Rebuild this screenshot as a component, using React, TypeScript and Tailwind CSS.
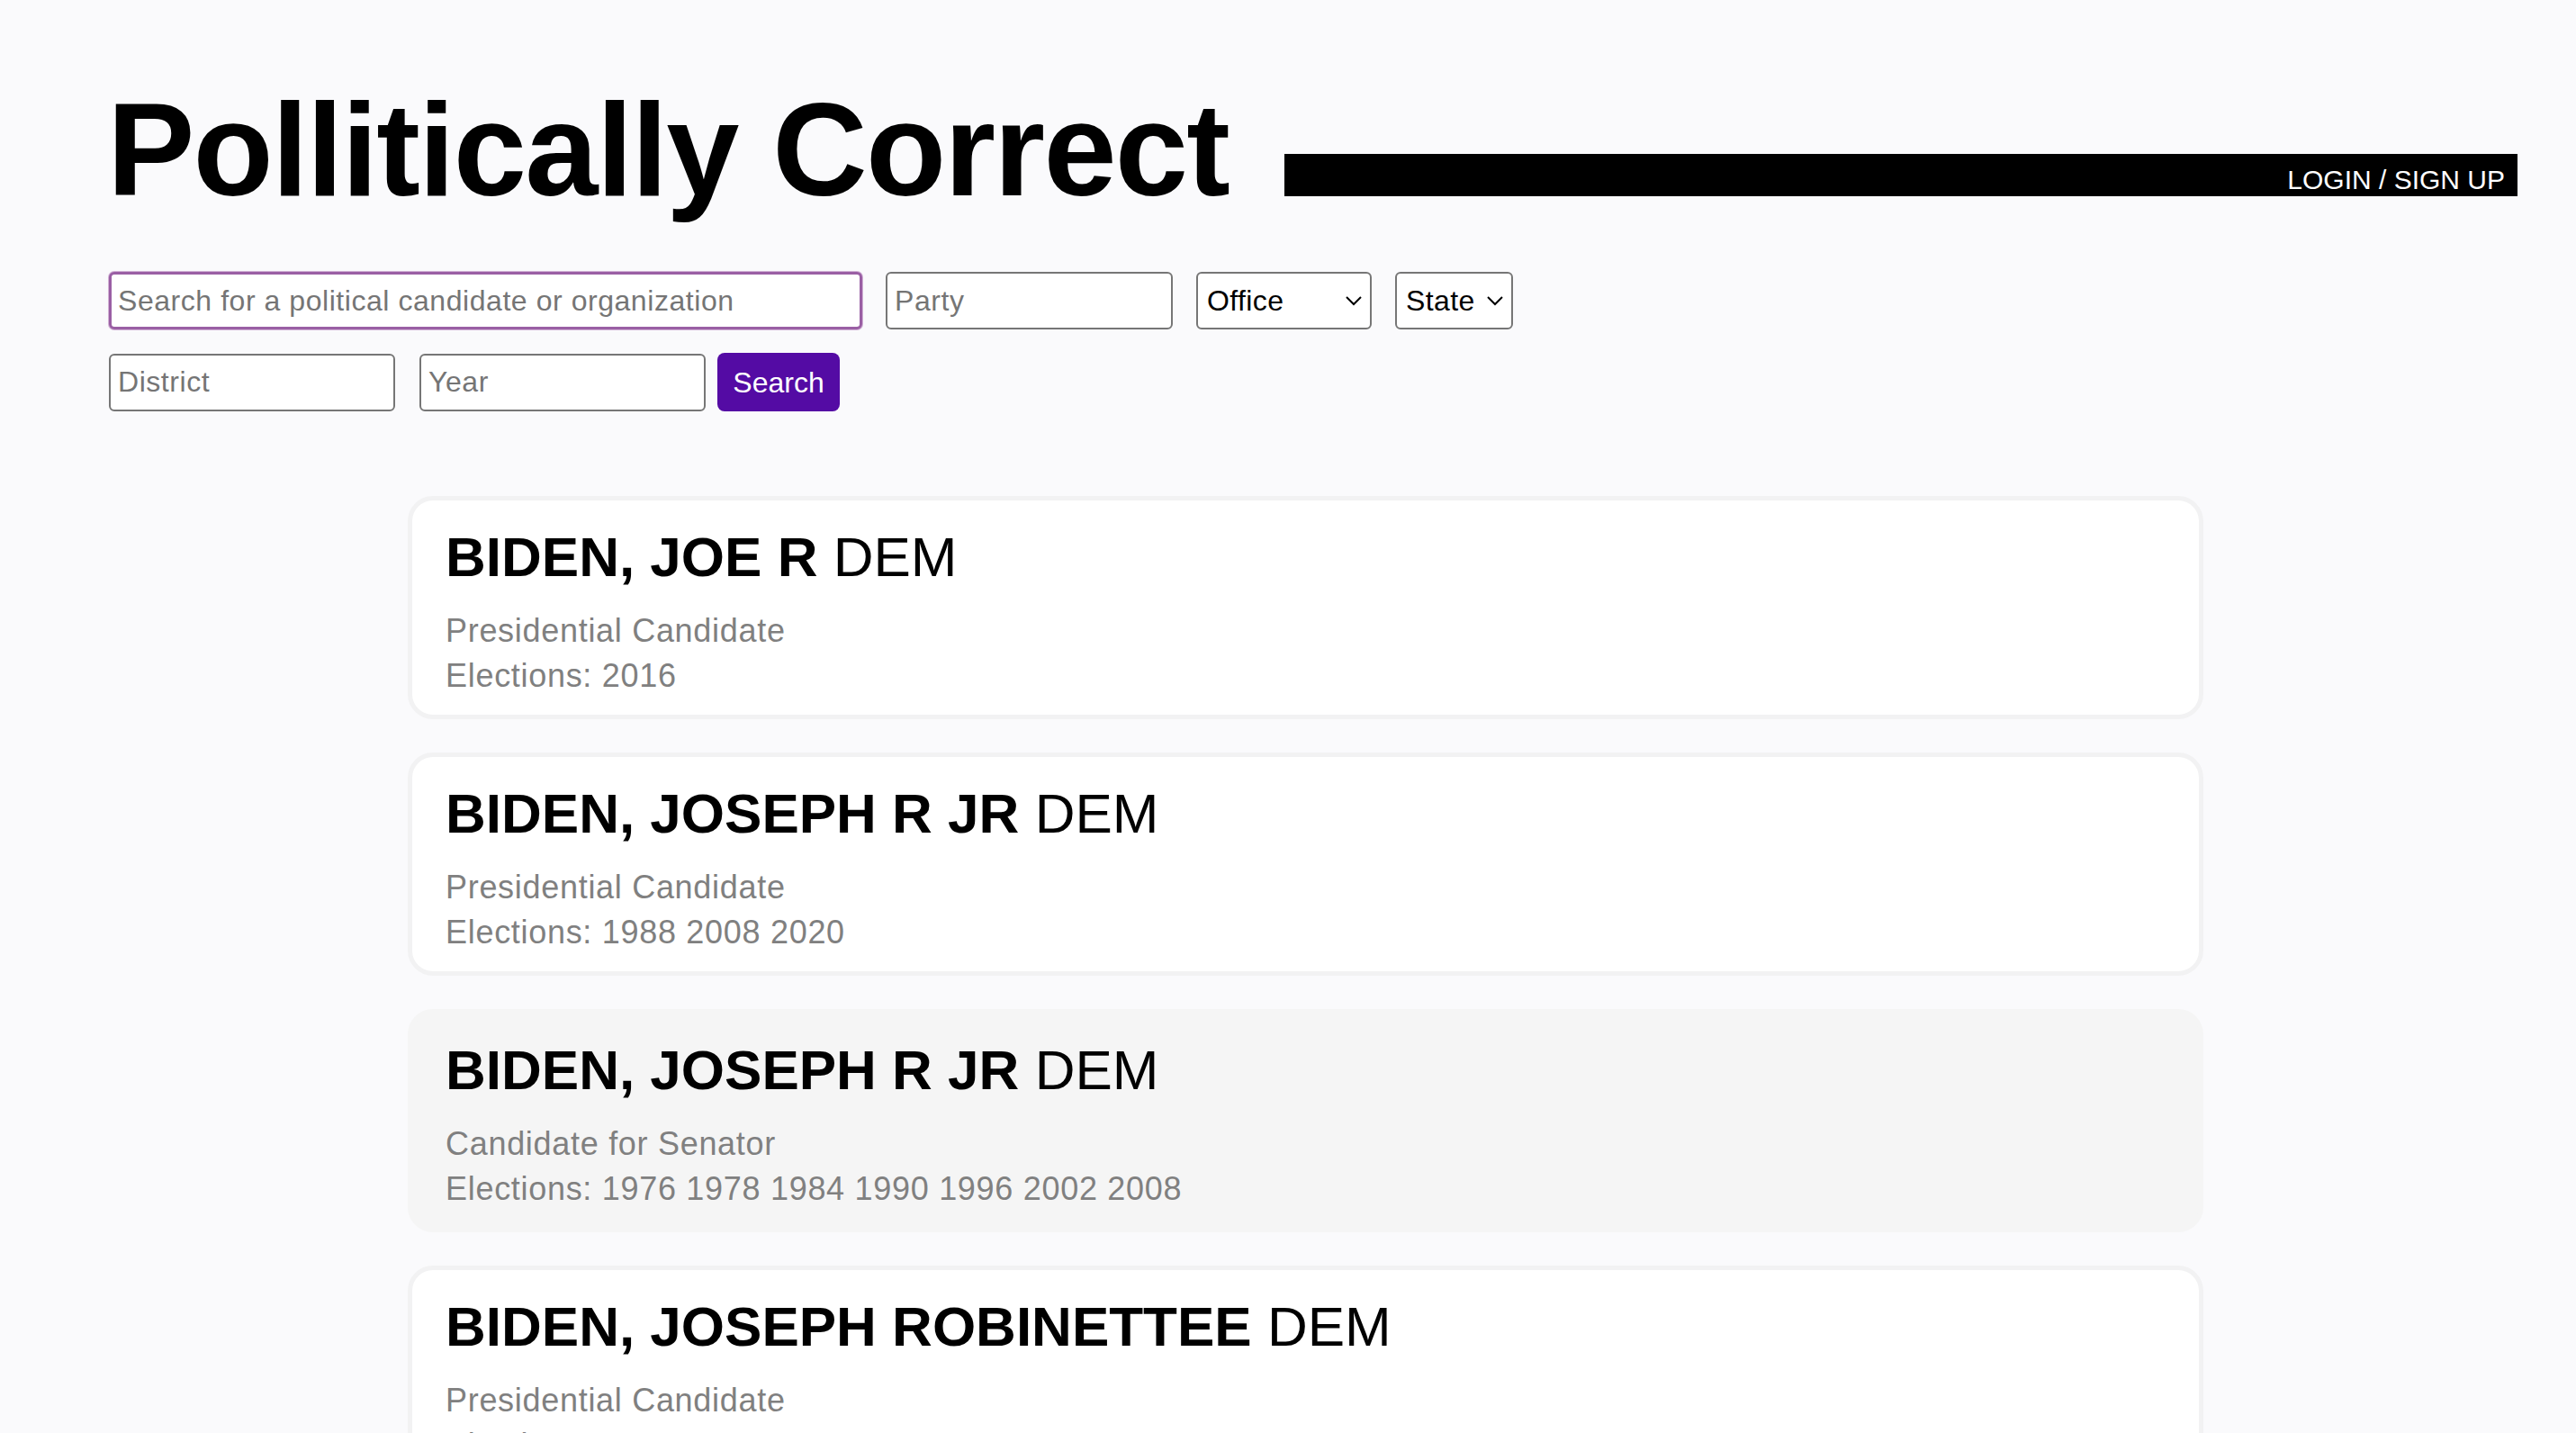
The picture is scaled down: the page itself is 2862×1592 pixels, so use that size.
import React from 'react';

const font = { fontFamily: '"Liberation Sans", Arial, sans-serif' };

type Result = {
  name: string;
  party: string;
  office: string;
  years: string;
  hovered?: boolean;
};

const results: Result[] = [
  { name: 'BIDEN, JOE R', party: 'DEM', office: 'Presidential Candidate', years: '2016' },
  { name: 'BIDEN, JOSEPH R JR', party: 'DEM', office: 'Presidential Candidate', years: '1988 2008 2020' },
  {
    name: 'BIDEN, JOSEPH R JR',
    party: 'DEM',
    office: 'Candidate for Senator',
    years: '1976 1978 1984 1990 1996 2002 2008',
    hovered: true,
  },
  { name: 'BIDEN, JOSEPH ROBINETTEE', party: 'DEM', office: 'Presidential Candidate', years: '2016' },
];

const Chevron = () => (
  <svg width="20" height="12" viewBox="0 0 20 12" fill="none">
    <polyline points="2,2 10,10 18,2" stroke="#000" strokeWidth="2" />
  </svg>
);

const inputCls =
  'h-[64px] rounded-[6px] border-2 border-[#767676] bg-white px-[8px] text-[32px] tracking-[0.55px] text-black placeholder:text-[#757575] outline-none';

const ResultCard = ({ r }: { r: Result }) => (
  <div
    className={
      r.hovered
        ? 'rounded-[28px] border-[5px] border-[#f5f5f5] bg-[#f5f5f5] pt-[26px] pb-[18px] pl-[37px]'
        : 'rounded-[28px] border-[5px] border-[#f2f2f3] bg-white pt-[26px] pb-[18px] pl-[37px]'
    }
  >
    <div className="text-[62px] leading-[74px] text-black">
      <span className="font-bold">{r.name}</span> {r.party}
    </div>
    <div className="mt-[20px] text-[36px] leading-[50px] tracking-[0.7px] text-[#808080]">
      <div>{r.office}</div>
      <div>Elections: {r.years}</div>
    </div>
  </div>
);

export default function App() {
  return (
    <div className="min-h-screen bg-[#fafafc] pb-[40px]" style={font}>
      {/* Header */}
      <div className="flex items-start pt-[94px] pl-[119px] pr-[65px]">
        <h1 className="text-[146px] leading-none font-bold tracking-[-1.8px] text-black whitespace-nowrap">
          Pollitically Correct
        </h1>
        <div className="ml-[62px] mt-[77px] flex h-[47px] flex-1 items-end justify-end bg-black pr-[14px] pb-[3px]">
          <a href="#" className="text-[30px] leading-none text-white">
            LOGIN / SIGN UP
          </a>
        </div>
      </div>

      {/* Search form */}
      <div className="mt-[62px] pl-[121px]">
        <div className="flex items-center gap-[26px]">
          <input
            className="h-[64px] w-[837px] rounded-[6px] border-[3px] border-[#9a5fa4] bg-white px-[7px] text-[32px] tracking-[0.55px] placeholder:text-[#757575] outline-none ring-1 ring-[#d2b3d6]"
            placeholder="Search for a political candidate or organization"
          />
          <input className={`${inputCls} w-[319px]`} placeholder="Party" />
          <div className="flex h-[64px] w-[195px] items-center justify-between rounded-[6px] border-2 border-[#767676] bg-white pl-[10px] pr-[8px] text-[32px] tracking-[0.4px] text-black">
            <span>Office</span>
            <Chevron />
          </div>
          <div className="flex h-[64px] w-[131px] items-center justify-between rounded-[6px] border-2 border-[#767676] bg-white pl-[10px] pr-[8px] text-[32px] tracking-[0.4px] text-black">
            <span>State</span>
            <Chevron />
          </div>
        </div>
        <div className="mt-[26px] flex items-center">
          <input className={`${inputCls} w-[318px]`} placeholder="District" />
          <input className={`${inputCls} ml-[27px] w-[318px]`} placeholder="Year" />
          <button className="ml-[13px] h-[65px] w-[136px] rounded-[8px] bg-[#540ba4] text-[32px] text-white">
            Search
          </button>
        </div>
      </div>

      {/* Results */}
      <div className="mt-[94px] ml-[453px] flex w-[1995px] flex-col gap-[37px]">
        {results.map((r, i) => (
          <ResultCard key={i} r={r} />
        ))}
      </div>
    </div>
  );
}
